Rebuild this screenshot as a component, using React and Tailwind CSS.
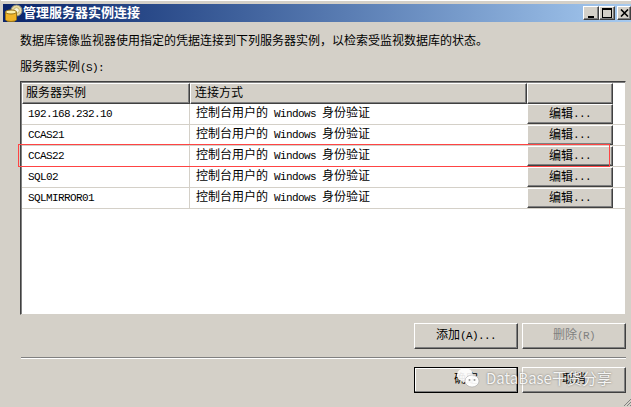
const FONT = "font-['Liberation_Mono','Noto_Sans_CJK_SC',monospace]";
const rows = ["192.168.232.10", "CCAS21", "CCAS22", "SQL02", "SQLMIRROR01"];
const raised = "border border-t-white border-l-white border-r-[#404040] border-b-[#404040] shadow-[inset_-1px_-1px_0_#808080] bg-[#d4d0c8]";

function L({ children, className = "" }) {
  return <span className={`text-[11px] tracking-[-0.6px] ${className}`}>{children}</span>;
}

function Btn({ children, className = "", disabled, def }) {
  return (
    <div
      className={`flex items-center justify-center w-[104px] h-[26px] bg-[#d4d0c8] text-[12px] whitespace-nowrap ${
        def ? "border border-black shadow-[inset_-1px_-1px_0_#808080,inset_1px_1px_0_#fff]" : raised
      } ${disabled ? "text-[#808080]" : "text-black"} ${className}`}
    >
      {children}
    </div>
  );
}

function Caption({ children, className = "" }) {
  return (
    <div className={`flex items-center justify-center h-[14px] ${raised} ${className}`}>{children}</div>
  );
}

export default function App() {
  return (
    <div className={`relative w-[631px] h-[407px] overflow-hidden bg-[#d4d0c8] text-black ${FONT}`}>
      <div className="h-[4px] ml-[1px] bg-[#d4d0c8] border-t border-t-white" />
      <div className="flex items-center h-[18px] ml-[3px] bg-gradient-to-r from-[#0a246a] to-[#a6caf0]">
        <svg width="18" height="18" viewBox="0 0 18 18" className="shrink-0 ml-[2px]">
          <circle cx="11.5" cy="6.5" r="5.5" fill="#e9d9a0" stroke="#8f8f80" />
          <circle cx="11.5" cy="6.5" r="2.8" fill="#f7f3e0" stroke="#b9a860" strokeWidth="0.8" />
          <path d="M0.5 8 V15.5 Q0.5 17.5 6 17.5 Q11.5 17.5 11.5 15.5 V8 Z" fill="#f0b428" stroke="#9a7414" />
          <ellipse cx="6" cy="8" rx="5.5" ry="2" fill="#fcefa8" stroke="#9a7414" />
        </svg>
        <span className="pt-[2px] text-[13px] leading-[16px] font-bold text-white whitespace-nowrap">管理服务器实例连接</span>
        <div className="ml-auto flex items-center">
          <Caption className="w-[16px]">
            <div className="w-[6px] h-[2px] mt-[7px] bg-black" />
          </Caption>
          <Caption className="w-[16px]">
            <div className="w-[10px] h-[10px] border border-black border-t-2" />
          </Caption>
          <Caption className="ml-[2px] w-[14px]">
            <svg width="9" height="8" viewBox="0 0 9 8">
              <path d="M1 0.5 L8 7.5 M8 0.5 L1 7.5" stroke="#000" strokeWidth="1.6" />
            </svg>
          </Caption>
        </div>
      </div>

      <div className="pl-[20px] pr-[5px]">
        <div className="mt-[13px] h-[14px] text-[12px] leading-[14px] whitespace-nowrap">
          数据库镜像监视器使用指定的凭据连接到下列服务器实例，以检索受监视数据库的状态。
        </div>
        <div className="mt-[12px] h-[14px] text-[12px] leading-[14px] whitespace-nowrap">服务器实例<L>(S):</L></div>

        <div className="mt-[6px] h-[234px] bg-white border border-t-[#404040] border-l-[#404040] border-r-[#d4d0c8] border-b-[#d4d0c8] shadow-[inset_1px_1px_0_#808080]">
          <div className="flex h-[22px] pl-[1px] pt-[1px]">
            <div className={`w-[168px] flex items-center pl-[3px] text-[12px] ${raised}`}>服务器实例</div>
            <div className={`w-[337px] flex items-center pl-[4px] text-[12px] ${raised}`}>连接方式</div>
            <div className={`w-[86px] ${raised}`} />
          </div>
          <div className="pl-[1px]">
            {rows.map((r) => (
              <div key={r} className="flex h-[21px] border-b border-b-[#d4d0c8]">
                <div className="w-[168px] flex items-center pl-[6px] text-[11px] tracking-[-0.6px] border-r border-r-[#d4d0c8] whitespace-nowrap">{r}</div>
                <div className="w-[337px] flex items-center pl-[6px] text-[12px] whitespace-nowrap">
                  控制台用户的<L className="mx-[6px]">Windows</L>身份验证
                </div>
                <div className={`w-[86px] flex items-center justify-center pt-[1px] text-[12px] ${raised}`}>
                  编辑<L>...</L>
                </div>
              </div>
            ))}
          </div>
        </div>

        <div className="mt-[8px] flex justify-end gap-[4px] h-[26px]">
          <Btn>添加<L>(A)...</L></Btn>
          <Btn disabled>删除<L>(R)</L></Btn>
        </div>
        <div className="mt-[8px] ml-[1px] h-[2px] border-t border-t-[#808080] border-b border-b-white" />
        <div className="mt-[8px] flex justify-end gap-[4px] h-[26px]">
          <Btn def>确定</Btn>
          <Btn>取消</Btn>
        </div>
      </div>

      <svg width="8" height="8" viewBox="0 0 8 8" className="absolute right-0 bottom-[1px]">
        <path d="M8 1 L1 8 M8 4 L4 8 M8 7 L7 8" stroke="#808080" fill="none" />
      </svg>

      <div className="absolute left-[456px] top-[367px] flex items-center [text-shadow:0_0_2px_rgba(0,0,0,0.5)]">
        <svg width="26" height="22" viewBox="0 0 26 22">
          <ellipse cx="9" cy="8" rx="8" ry="7" fill="#fff" fillOpacity="0.9" />
          <ellipse cx="16" cy="14" rx="7" ry="6" fill="#fff" fillOpacity="0.95" stroke="#999" strokeWidth="0.5" />
          <circle cx="13.5" cy="13" r="1" fill="#999" />
          <circle cx="18.5" cy="13" r="1" fill="#999" />
        </svg>
        <span className="ml-[4px] text-[15px] leading-[20px] text-white/90 font-['Noto_Sans_CJK_SC',sans-serif] whitespace-nowrap">DataBase干货分享</span>
      </div>

      <div className="absolute left-[18px] top-[144px] w-[592px] h-[23px] border border-[#f44] pointer-events-none" />
    </div>
  );
}
